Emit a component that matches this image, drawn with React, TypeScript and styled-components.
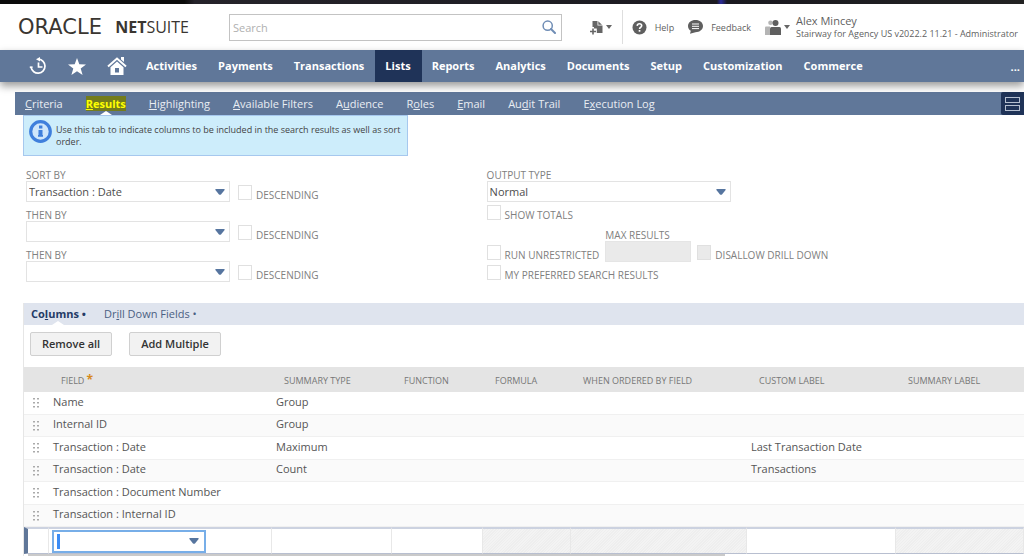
import React from "react";
import styled, { createGlobalStyle, css } from "styled-components";

const Global = createGlobalStyle`
  * { box-sizing: border-box; }
  body {
    margin: 0;
    background: #fff;
    color: #4d4d4d;
    font-family: "Open Sans", "Noto Sans", sans-serif;
    font-size: 11px;
    overflow-x: hidden;
  }
  button, input, select { font: inherit; color: inherit; }
  a { color: inherit; text-decoration: none; }
`;

const TopStrip = styled.div`
  height: 4px;
  background: linear-gradient(90deg, #0b0b0b 0%, #0b0b0b 18%, #25232a 19%, #1b1a20 70%, #2a2a9a 70.4%, #1a1920 71%, #222 100%);
`;

const Header = styled.header`
  display: flex;
  align-items: center;
  height: 46px;
  padding: 0 6px 0 18px;
  color: #5f5f5f;
`;

const Logo = styled.a`
  display: flex;
  align-items: center;
  justify-content: space-between;
  width: 171px;
  margin-right: 40px;
  line-height: 20px;
  color: #3a3631;
`;

const LogoOracle = styled.span`
  font-family: "DejaVu Sans", sans-serif;
  font-size: 21px;
`;

const LogoSuite = styled.span`
  font-size: 16px;
  b { font-weight: 700; }
`;

const SearchBox = styled.form`
  display: flex;
  align-items: center;
  flex: 1;
  height: 27px;
  padding-right: 5px;
  border: 1px solid #c3c3c3;
`;

const SearchInput = styled.input`
  flex: 1;
  min-width: 0;
  height: 25px;
  padding: 0 3px;
  border: 0;
  outline: 0;
  &::placeholder { color: #b0b0b0; opacity: 1; }
`;

const PlainButton = styled.button`
  display: flex;
  align-items: center;
  gap: 3px;
  padding: 0;
  border: 0;
  background: none;
  color: #5f5f5f;
`;

const HeaderTools = styled.div`
  display: flex;
  align-items: center;
  margin-left: 28px;
`;

const Divider = styled.span`
  width: 1px;
  height: 34px;
  margin: 0 9px 0 10px;
  background: #dedede;
`;

const HelpLink = styled.a`
  display: flex;
  align-items: center;
  gap: 8px;
  margin-right: 14px;
  font-size: 9px;
`;

const User = styled.div`
  margin-left: 6px;
  line-height: 13px;
  white-space: nowrap;
`;
const UserName = styled.div`font-size: 11px;`;
const UserRole = styled.div`font-size: 9px;`;

const Nav = styled.nav`
  position: relative;
  display: flex;
  align-items: center;
  height: 32px;
  padding: 0 4px 0 29px;
  background: #607799;
  color: #fff;
  font-size: 11px;
  font-weight: 700;
  box-shadow: 0 4px 8px rgba(0, 0, 0, 0.4);
`;

const NavIcons = styled.div`
  display: flex;
  align-items: center;
  gap: 21px;
  margin-right: 9px;
`;

const NavIcon = styled.a`
  display: flex;
`;

const NavItem = styled.a<{ $active?: boolean }>`
  padding: 0 11px 0 10px;
  line-height: 32px;
  ${(p) => p.$active && css`background: #1f3358;`}
`;

const NavMore = styled.button`
  margin-left: auto;
  padding: 0;
  border: 0;
  background: none;
  font-weight: 700;
`;

const Tabs = styled.nav`
  display: flex;
  align-items: center;
  gap: 23px;
  height: 23px;
  margin: 10px 0 0 15px;
  padding-left: 10px;
  background: #607799;
  color: #e9edf3;
  line-height: 23px;
`;

const Tab = styled.a<{ $active?: boolean }>`
  position: relative;
  ${(p) =>
    p.$active &&
    css`
      color: #ffff00;
      font-weight: 700;
      &::after {
        content: "";
        position: absolute;
        left: 50%;
        bottom: 0;
        margin-left: -6px;
        border: 6px solid transparent;
        border-top: 0;
        border-bottom: 4px solid #fff;
      }
    `}
`;

const Marked = styled.mark`
  background: #747c1c;
  color: inherit;
`;

const LayoutButton = styled.button`
  display: flex;
  align-items: center;
  justify-content: center;
  width: 23px;
  height: 23px;
  margin-left: auto;
  padding: 0;
  border: 0;
  border-radius: 2px 0 0 2px;
  background: #1f3358;
`;

const Info = styled.section`
  display: flex;
  gap: 4px;
  width: 385px;
  height: 41px;
  margin-left: 23px;
  padding: 4px 0 0 5px;
  border: 1px solid #a6c8ee;
  background: #cdedfb;
  font-size: 9px;
  line-height: 12px;
  color: #444;
  svg { flex: none; }
  p { margin: 4px 0 0; }
`;

const FormGrid = styled.form`
  display: grid;
  grid-template-columns: 6fr 7fr;
  padding: 12px 0 0 26px;
  color: #808080;
`;

const Column = styled.div`
  display: flex;
  flex-direction: column;
`;

const FieldRow = styled.div`
  display: flex;
  align-items: flex-end;
  gap: 8px;
  margin-bottom: 6px;
`;

const TotalsRow = styled(FieldRow)`
  padding-top: 3px;
`;

const LimitsRow = styled(FieldRow)`
  gap: 6px;
  margin-bottom: 3px;
`;

const Field = styled.label<{ $width: number }>`
  display: block;
  width: ${(p) => p.$width}px;
  padding-top: 2px;
  font-size: 10px;
  line-height: 11px;
`;

const SelectWrap = styled.span`
  position: relative;
  display: block;
  height: 21px;
`;

const Select = styled.select`
  appearance: none;
  display: block;
  width: 100%;
  height: 21px;
  padding: 0 2px;
  border: 1px solid #e3e3e3;
  border-radius: 0;
  background: #fff;
  color: #4d4d4d;
  font-size: 11px;
`;

const Arrow = styled.svg`
  position: absolute;
  top: 8px;
  right: 5px;
  pointer-events: none;
`;

const DisabledInput = styled.input`
  display: block;
  width: 100%;
  height: 21px;
  border: 1px solid #e5e5e5;
  background: #eaeaea;
`;

const CheckLabel = styled.label`
  display: flex;
  align-items: flex-start;
  gap: 4px;
  height: 17px;
  font-size: 10px;
  line-height: 14px;
  white-space: nowrap;
  span { padding-top: 3px; }
`;

const Checkbox = styled.input`
  appearance: none;
  width: 14px;
  height: 15px;
  margin: 0;
  border: 1px solid #e0e0e0;
  background: #fff;
  &:disabled { background: #eaeaea; }
`;

const Sublist = styled.section`
  margin: 15px 0 0 23px;
  border-left: 1px solid #e6e6e6;
`;

const SubTabs = styled.nav`
  display: flex;
  height: 22px;
  padding-left: 7px;
  gap: 18px;
  background: #dfe4ee;
  line-height: 22px;
`;

const SubTab = styled(Tab)`
  color: ${(p) => (p.$active ? "#243a66" : "#4b5f83")};
`;

const ButtonRow = styled.div`
  display: flex;
  gap: 17px;
  padding: 7px 6px 11px;
`;

const Button = styled.button`
  height: 24px;
  padding: 0 11px 2px;
  border: 1px solid #d0d0d0;
  border-radius: 2px;
  background: #f2f2f2;
  color: #333;
  font-weight: 600;
`;

const Table = styled.table`
  width: 100%;
  border-collapse: separate;
  border-spacing: 0;
  table-layout: fixed;
`;

const Col = styled.col<{ $width?: number }>`
  width: ${(p) => (p.$width ? `${p.$width}px` : "auto")};
`;

const Th = styled.th`
  height: 25px;
  padding: 2px 0 0 12px;
  background: #e4e4e4;
  color: #777;
  font-size: 9px;
  font-weight: 400;
  line-height: 12px;
  text-align: left;
  white-space: nowrap;
`;

const Required = styled.span`
  margin-left: 2px;
  color: #d68a1c;
  font-size: 12px;
  font-weight: 700;
`;

const Row = styled.tr`
  td { height: 22px; }
  &:nth-child(even) td {
    height: 23px;
    border: solid #f0f0f0;
    border-width: 1px 0;
    background: #fafafa;
  }
`;

const Td = styled.td`
  padding: 0 0 4px 4px;
  color: #555;
  line-height: 15px;
  white-space: nowrap;
`;

const GripTd = styled.td`
  padding: 0 0 0 9px;
  line-height: 0;
`;

const EditTd = styled.td<{ $off?: boolean; $mark?: boolean }>`
  height: 27px;
  padding: 0 0 0 3px;
  border-top: 2px solid #ccd2e0;
  border-bottom: 1px solid #b8bfd0;
  border-right: 1px solid #e8e8e8;
  ${(p) =>
    p.$off &&
    css`background: repeating-linear-gradient(135deg, #f3f3f3 0 1px, #eeeeee 1px 2px);`}
  ${(p) => p.$mark && css`border-left: 4px solid #607799;`}
`;

const Combo = styled.div`
  display: flex;
  align-items: center;
  width: 154px;
  height: 23px;
  padding: 0 5px 0 3px;
  border: 2px solid #77aee8;
  background: #fff;
`;

const Caret = styled.span`
  width: 3px;
  height: 15px;
  background: #3b8cf5;
`;

const ComboInput = styled.input`
  flex: 1;
  min-width: 0;
  height: 17px;
  padding: 0;
  border: 0;
  outline: 0;
`;

const ScrollTrack = styled.div`
  height: 2px;
  padding-left: 4px;
`;
const ScrollThumb = styled.div`
  width: 70%;
  height: 2px;
  background: #cacaca;
`;

const trianglePath = "M1 0h8q1 0 .6 1L6 5.400Q5 6.200 4 5.400L.4 1Q0 0 1 0z";

const DownArrow = () => (
  <Arrow width="10" height="6" viewBox="0 0 10 6" aria-hidden="true">
    <path d={trianglePath} fill="#56759f" />
  </Arrow>
);

const SmallArrow = () => (
  <svg width="6" height="4" viewBox="0 0 6 4" aria-hidden="true">
    <path d="M0 0h6L3 4z" fill="#666" />
  </svg>
);

const Grip = () => (
  <svg width="6" height="10" viewBox="0 0 6 10" aria-hidden="true" fill="#aaa">
    {[0, 4, 8].map((y) => (
      <g key={y}>
        <rect x="0" y={y} width="2" height="1.500" />
        <rect x="4" y={y} width="2" height="1.500" />
      </g>
    ))}
  </svg>
);

function Dropdown({ options, label }: { options: string[]; label: string }) {
  return (
    <SelectWrap>
      <Select aria-label={label}>
        {options.map((o) => (
          <option key={o}>{o}</option>
        ))}
      </Select>
      <DownArrow />
    </SelectWrap>
  );
}

function Check({ text, disabled }: { text: string; disabled?: boolean }) {
  return (
    <CheckLabel>
      <Checkbox type="checkbox" disabled={disabled} />
      <span>{text}</span>
    </CheckLabel>
  );
}

const navItems = ["Activities", "Payments", "Transactions", "Lists", "Reports", "Analytics", "Documents", "Setup", "Customization", "Commerce"];

const tabs: [string, string, string][] = [
  ["", "C", "riteria"],
  ["", "R", "esults"],
  ["", "H", "ighlighting"],
  ["", "A", "vailable Filters"],
  ["A", "u", "dience"],
  ["R", "o", "les"],
  ["", "E", "mail"],
  ["Au", "d", "it Trail"],
  ["E", "x", "ecution Log"],
];

const headings = ["SUMMARY TYPE", "FUNCTION", "FORMULA", "WHEN ORDERED BY FIELD", "CUSTOM LABEL", "SUMMARY LABEL"];

const rows = [
  ["Name", "Group", ""],
  ["Internal ID", "Group", ""],
  ["Transaction : Date", "Maximum", "Last Transaction Date"],
  ["Transaction : Date", "Count", "Transactions"],
  ["Transaction : Document Number", "", ""],
  ["Transaction : Internal ID", "", ""],
];

export default function App() {
  return (
    <>
      <Global />
      <TopStrip />
      <Header>
        <Logo href="#" aria-label="Oracle NetSuite">
          <LogoOracle>ORACLE</LogoOracle>
          <LogoSuite><b>NET</b>SUITE</LogoSuite>
        </Logo>
        <SearchBox>
          <SearchInput placeholder="Search" aria-label="Search" />
          <PlainButton type="button" aria-label="Run search">
            <svg width="14" height="14" viewBox="0 0 14 14" fill="none" stroke="#6f8db5">
              <circle cx="5.700" cy="5.700" r="4.600" strokeWidth="1.500" />
              <path d="M9 9l4 4" strokeWidth="2" strokeLinecap="round" />
            </svg>
          </PlainButton>
        </SearchBox>
        <HeaderTools>
          <PlainButton aria-label="Create new">
            <svg width="13" height="15" viewBox="0 0 13 15" fill="#666">
              <path d="M2.500 1h5v4.500h5V13H6.800V8.500H4V7H2.500z" />
              <path d="M8.300 1.200v3.500h3.700z" />
              <path d="M2.200 8.500h1.600v2.200H6v1.600H3.800v2.200H2.200v-2.200H0v-1.600h2.200z" />
            </svg>
            <SmallArrow />
          </PlainButton>
          <Divider />
          <HelpLink href="#">
            <svg width="15" height="15" viewBox="0 0 15 15">
              <circle cx="7.500" cy="7.500" r="7" fill="#5f5f5f" />
              <path d="M5.200 5.800Q5.400 3.700 7.500 3.700t2.200 1.900Q9.700 6.800 8.400 7.500q-.8.500-.8 1.400" fill="none" stroke="#fff" strokeWidth="1.600" />
              <rect x="6.700" y="10" width="1.700" height="1.700" fill="#fff" />
            </svg>
            Help
          </HelpLink>
          <HelpLink href="#">
            <svg width="15" height="14" viewBox="0 0 15 14">
              <path d="M7.500 0C11.800 0 15 2.600 15 6s-3.200 6.200-7.500 6.200L2 13.800l.8-3C1 9.800 0 8 0 6c0-3.400 3.200-6 7.500-6z" fill="#5f5f5f" />
              <path d="M4 4h7M4 6.300h7M4 8.600h7" stroke="#fff" />
            </svg>
            Feedback
          </HelpLink>
          <PlainButton aria-label="Change role">
            <svg width="16" height="15" viewBox="0 0 16 15">
              <g fill="#b5b5b5">
                <circle cx="5.500" cy="2.800" r="2.300" />
                <path d="M0 7.500q0-1 1-1h4V15H0z" />
              </g>
              <circle cx="10.500" cy="3" r="3" fill="#5f5f5f" />
              <path d="M5 8.500Q5 7 6.500 7h8Q16 7 16 8.500V15H5z" fill="#5f5f5f" />
            </svg>
            <SmallArrow />
          </PlainButton>
          <User>
            <UserName>Alex Mincey</UserName>
            <UserRole>Stairway for Agency US v2022.2 11.21 - Administrator</UserRole>
          </User>
        </HeaderTools>
      </Header>

      <Nav>
        <NavIcons>
          <NavIcon href="#" aria-label="Recent records">
            <svg width="18" height="18" viewBox="0 0 18 18" fill="none" stroke="#fff" strokeWidth="1.700">
              <path d="M9.500 2.200a7 7 0 1 1-7.400 8.200" />
              <path d="M9.500 5.500V10h4" />
              <path d="M11 0L7 2.200l4 2.300z" fill="#fff" stroke="none" />
              <path d="M.8 10.200h2.800" />
            </svg>
          </NavIcon>
          <NavIcon href="#" aria-label="Shortcuts">
            <svg width="18" height="17" viewBox="0 0 18 17" fill="#fff">
              <path d="M9 0l2.300 6.200 6.700.2-5.300 4.100L14.600 17 9 13.200 3.400 17l1.900-6.500L0 6.400l6.700-.2z" />
            </svg>
          </NavIcon>
          <NavIcon href="#" aria-label="Home">
            <svg width="20" height="18" viewBox="0 0 20 18" fill="#fff">
              <path d="M1 9.500L10 1.500l9 8" fill="none" stroke="#fff" strokeWidth="2" />
              <path d="M14 0h3v5l-3-2.500z" />
              <path fillRule="evenodd" d="M10 4.500l6.500 5.800V18h-13v-7.700zM8 11v4.500h4V11z" />
            </svg>
          </NavIcon>
        </NavIcons>
        {navItems.map((n) => (
          <NavItem key={n} href="#" $active={n === "Lists"}>{n}</NavItem>
        ))}
        <NavMore aria-label="More">...</NavMore>
      </Nav>

      <main>
        <Tabs>
          {tabs.map(([a, u, b]) => {
            const active = b === "esults";
            const text = <>{a}<u>{u}</u>{b}</>;
            return (
              <Tab key={b} href="#" $active={active}>
                {active ? <Marked>{text}</Marked> : text}
              </Tab>
            );
          })}
          <LayoutButton aria-label="Toggle layout">
            <svg width="15" height="14" viewBox="0 0 15 14" fill="none" stroke="#b5bfd0">
              <rect x=".5" y=".5" width="14" height="5" />
              <rect x=".5" y="8.500" width="14" height="5" />
            </svg>
          </LayoutButton>
        </Tabs>
        <Info>
          <svg width="23" height="23" viewBox="0 0 23 23">
            <circle cx="11.500" cy="11.500" r="9.800" fill="#cfe6fb" stroke="#3f7fdc" strokeWidth="3.200" />
            <path d="M10 5.500h3.400v3H10zM9.500 10h4v5.500h-4zM9 15h5v1.800H9z" fill="#3f7fdc" />
          </svg>
          <p>Use this tab to indicate columns to be included in the search results as well as sort order.</p>
        </Info>

        <FormGrid>
          <Column>
            {["SORT BY", "THEN BY", "THEN BY"].map((label, i) => (
              <FieldRow key={i}>
                <Field $width={204}>
                  {label}
                  <Dropdown label={label} options={[i === 0 ? "Transaction : Date" : ""]} />
                </Field>
                <Check text="DESCENDING" />
              </FieldRow>
            ))}
          </Column>
          <Column>
            <Field $width={244}>
              OUTPUT TYPE
              <Dropdown label="Output type" options={["Normal"]} />
            </Field>
            <TotalsRow>
              <Check text="SHOW TOTALS" />
            </TotalsRow>
            <LimitsRow>
              <Check text="RUN UNRESTRICTED" />
              <Field $width={86}>
                MAX RESULTS
                <DisabledInput disabled />
              </Field>
              <Check text="DISALLOW DRILL DOWN" disabled />
            </LimitsRow>
            <Check text="MY PREFERRED SEARCH RESULTS" />
          </Column>
        </FormGrid>

        <Sublist>
          <SubTabs>
            <SubTab href="#" $active>Co<u>l</u>umns •</SubTab>
            <SubTab href="#">Dr<u>i</u>ll Down Fields •</SubTab>
          </SubTabs>
          <ButtonRow>
            <Button>Remove all</Button>
            <Button>Add Multiple</Button>
          </ButtonRow>
          <Table>
            <colgroup>
              {[25, 223, 120, 91, 88, 176, 149].map((w, i) => <Col key={i} $width={w} />)}
              <Col />
            </colgroup>
            <thead>
              <tr>
                <Th aria-label="Reorder" />
                <Th>FIELD<Required>*</Required></Th>
                {headings.map((h) => <Th key={h}>{h}</Th>)}
              </tr>
            </thead>
            <tbody>
              {rows.map(([field, summary, custom], i) => (
                <Row key={i}>
                  <GripTd><Grip /></GripTd>
                  <Td>{field}</Td>
                  <Td>{summary}</Td>
                  <Td /><Td /><Td />
                  <Td>{custom}</Td>
                  <Td />
                </Row>
              ))}
              <tr>
                <EditTd $mark />
                <EditTd>
                  <Combo>
                    <Caret />
                    <ComboInput aria-label="Field" />
                    <svg width="10" height="6" viewBox="0 0 10 6" aria-hidden="true">
                      <path d={trianglePath} fill="#56759f" />
                    </svg>
                  </Combo>
                </EditTd>
                <EditTd />
                <EditTd />
                <EditTd $off />
                <EditTd $off />
                <EditTd />
                <EditTd $off />
              </tr>
            </tbody>
          </Table>
          <ScrollTrack><ScrollThumb /></ScrollTrack>
        </Sublist>
      </main>
    </>
  );
}
